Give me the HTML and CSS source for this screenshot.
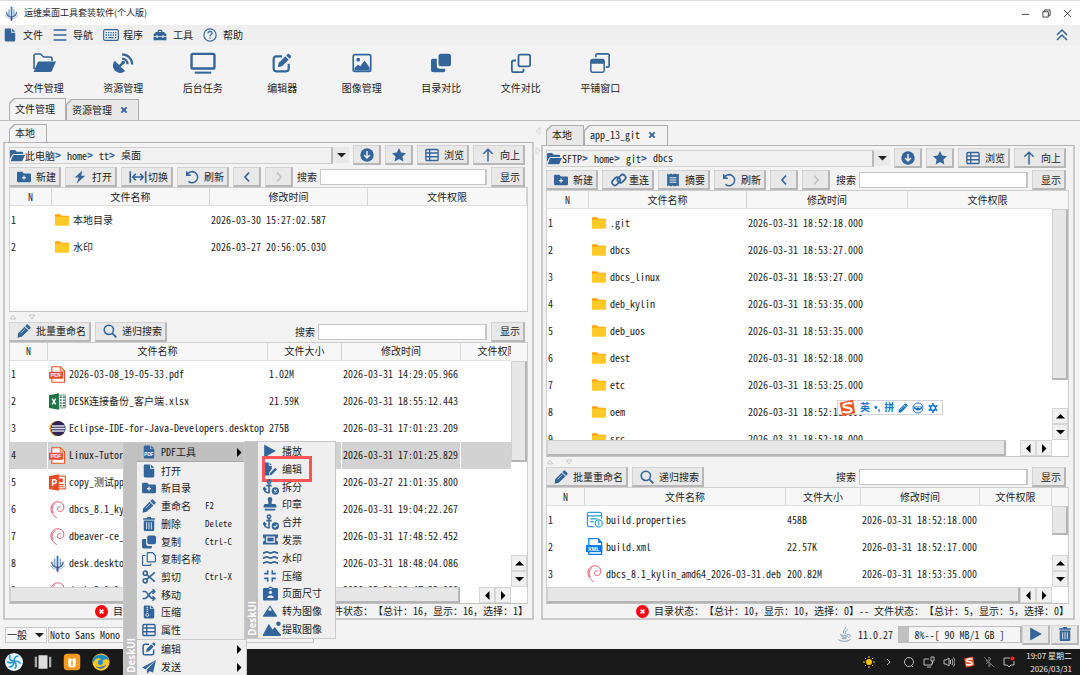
FILE: index.html
```html
<!DOCTYPE html>
<html lang="zh-CN">
<head>
<meta charset="utf-8">
<title>运维桌面工具套装软件(个人版)</title>
<link rel="stylesheet" href="styles.css">
</head>
<body>
<svg class="defs" aria-hidden="true">
  <symbol id="logo" viewBox="0 0 24 24"><g fill="none" stroke-linecap="round"><path d="M12 2v20" stroke="#3c78b8" stroke-width="2.6"/><path d="M8 6v9M16 6v9" stroke="#6f9fd0" stroke-width="2"/><path d="M4 10c0 5 3 7 8 8M20 10c0 5-3 7-8 8" stroke="#4a6ba0" stroke-width="2"/><path d="M2 15c2 3 5 5 10 5s8-2 10-5" stroke="#8fb1d8" stroke-width="1.4"/><path d="M12 17v6" stroke="#4b4277" stroke-width="2"/></g></symbol>
  <symbol id="file" viewBox="0 0 24 24"><path fill="currentColor" d="M5 1h9v7h7v13a2 2 0 0 1-2 2H5a2 2 0 0 1-2-2V3a2 2 0 0 1 2-2zM15.500 1l5.500 5.500h-5.500z"/></symbol>
  <symbol id="bars" viewBox="0 0 24 24"><path stroke="currentColor" stroke-width="2.600" d="M1 3.500h22M1 12h22M1 20.500h22"/></symbol>
  <symbol id="keyboard" viewBox="0 0 24 24"><rect x="1" y="4" width="22" height="16" rx="2" fill="none" stroke="currentColor" stroke-width="1.800"/><path stroke="currentColor" stroke-width="2" stroke-dasharray="2 1.500" d="M4 8.500h16M4 12h16"/><path stroke="currentColor" stroke-width="2" d="M4 16h2M8 16h8M18 16h2"/></symbol>
  <symbol id="toolbox" viewBox="0 0 24 24"><path fill="currentColor" d="M8 7V4.500A1.500 1.500 0 0 1 9.500 3h5A1.500 1.500 0 0 1 16 4.500V7h3l4 4v3h-5v-2h-2v2H8v-2H6v2H1v-3l4-4zM10 5v2h4V5zM1 15.500h5V17h2v-1.500h8V17h2v-1.500h5V21H1z"/></symbol>
  <symbol id="help" viewBox="0 0 24 24"><circle cx="12" cy="12" r="10.500" fill="none" stroke="currentColor" stroke-width="2"/><path d="M8.500 9.200c0-4.500 7-4.300 7 0 0 2.500-3.500 2.500-3.500 5M12 16.300v2.200" fill="none" stroke="currentColor" stroke-width="2.200"/></symbol>
  <symbol id="folder-open" viewBox="0 0 24 24"><path fill="none" stroke="currentColor" stroke-width="1.600" d="M2 18V5a2 2 0 0 1 2-2h4.500l3 3H18a2 2 0 0 1 2 2v2"/><path fill="currentColor" d="M7.500 10.500H24l-4 9.300a2 2 0 0 1-2 1.200H1.500l4-9.300a2 2 0 0 1 2-1.200z"/></symbol>
  <symbol id="folder-solid" viewBox="0 0 24 20"><path fill="currentColor" d="M0 15V3a2 2 0 0 1 2-2h6l3 3h8a2 2 0 0 1 2 2v1.500H6A3 3 0 0 0 3.300 9zM6 9h18l-4 9a2 2 0 0 1-2 1H1l3.500-9A1.500 1.500 0 0 1 6 9z"/></symbol>
  <symbol id="dish" viewBox="0 0 24 24"><path fill="currentColor" d="M3 9.500l4.700 4.700 2.500-2.500a2 2 0 1 1 1.800 1.800l-2.500 2.500 4.800 4.800a8 8 0 0 1-11.300-11.300z"/><path fill="none" stroke="currentColor" stroke-width="2.400" d="M11 7.300a6 6 0 0 1 6 6M11 2.500a11 11 0 0 1 11 11"/></symbol>
  <symbol id="monitor" viewBox="0 0 28 24"><rect x="1.500" y="2" width="25" height="16" rx="1.500" fill="none" stroke="currentColor" stroke-width="2.600"/><path d="M5 22.500h18" stroke="currentColor" stroke-width="2.200"/></symbol>
  <symbol id="edit" viewBox="0 0 24 24"><path fill="none" stroke="currentColor" stroke-width="2.600" d="M12 4H5a3 3 0 0 0-3 3v12a3 3 0 0 0 3 3h12a3 3 0 0 0 3-3v-6"/><path fill="currentColor" d="M8 12l8-8 4 4-8 8-5 1zM17 3l1.300-1.300a2 2 0 0 1 2.800 0l1.200 1.200a2 2 0 0 1 0 2.800L21 7z"/></symbol>
  <symbol id="image" viewBox="0 0 24 24"><rect x="1.500" y="2" width="21" height="20" rx="2" fill="none" stroke="currentColor" stroke-width="2"/><circle cx="7.500" cy="8" r="2.200" fill="currentColor"/><path fill="currentColor" d="M3 18l4-4 3 2 5-7 6 8v4H3z"/></symbol>
  <symbol id="copy" viewBox="0 0 24 24"><rect x="9" y="1" width="15" height="15" rx="3" fill="currentColor"/><path fill="currentColor" d="M7 7v8a4 4 0 0 0 4 4h6v2a2 2 0 0 1-2 2H3a3 3 0 0 1-3-3V9a2 2 0 0 1 2-2z"/></symbol>
  <symbol id="copy-line" viewBox="0 0 24 24"><g fill="none" stroke="currentColor" stroke-width="2.200"><rect x="9" y="2" width="14" height="14" rx="2"/><path d="M6 9H3a2 2 0 0 0-2 2v10a2 2 0 0 0 2 2h10a2 2 0 0 0 2-2v-2"/></g></symbol>
  <symbol id="copy-file" viewBox="0 0 24 24"><g fill="none" stroke="currentColor" stroke-width="2"><path d="M10 1h8l5 5v10a1 1 0 0 1-1 1H10a1 1 0 0 1-1-1V2a1 1 0 0 1 1-1zM6 6H2a1 1 0 0 0-1 1v15a1 1 0 0 0 1 1h12a1 1 0 0 0 1-1v-2"/></g></symbol>
  <symbol id="windows" viewBox="0 0 24 24"><path fill="none" stroke="currentColor" stroke-width="2" d="M7 5V3a2 2 0 0 1 2-2h12a2 2 0 0 1 2 2v12a2 2 0 0 1-2 2h-2"/><rect x="1" y="8" width="16" height="15" rx="2" fill="none" stroke="currentColor" stroke-width="1.800"/><path fill="currentColor" d="M1 13V9a2 2 0 0 1 2-2h12a2 2 0 0 1 2 2v4z"/></symbol>
  <symbol id="folder-plus" viewBox="0 0 24 20"><path fill="currentColor" fill-rule="evenodd" d="M0 3a2 2 0 0 1 2-2h7l3 3h10a2 2 0 0 1 2 2v11a2 2 0 0 1-2 2H2a2 2 0 0 1-2-2zM11 7.500V10H8.500v2H11v2.500h2V12h2.500v-2H13V7.500z"/></symbol>
  <symbol id="bolt" viewBox="0 0 24 24"><path fill="currentColor" d="M16 1L3 13h7L6 23l15-13h-7z"/></symbol>
  <symbol id="swap" viewBox="0 0 28 24"><path fill="none" stroke="currentColor" stroke-width="2.600" d="M2 3v18M26 3v18M6 12h16M10.500 7L6 12l4.500 5M17.500 7l4.500 5-4.500 5"/></symbol>
  <symbol id="undo" viewBox="0 0 24 24"><path fill="none" stroke="currentColor" stroke-width="2.600" d="M3 2v7h7M3.500 8.500A9.500 9.500 0 1 1 6 19.500"/></symbol>
  <symbol id="left" viewBox="0 0 24 24"><path fill="none" stroke="currentColor" stroke-width="3.400" d="M16 3l-8 9 8 9"/></symbol>
  <symbol id="right" viewBox="0 0 24 24"><path fill="none" stroke="currentColor" stroke-width="3.400" d="M8 3l8 9-8 9"/></symbol>
  <symbol id="down-circle" viewBox="0 0 24 24"><circle cx="12" cy="12" r="11.500" fill="currentColor"/><path fill="none" stroke="#eee" stroke-width="2.600" d="M12 5v12M7 12l5 5 5-5"/></symbol>
  <symbol id="star" viewBox="0 0 24 24"><path fill="currentColor" d="M12 0l3.600 7.700 8.400 1.100-6.200 5.800 1.600 8.400-7.400-4.100L4.600 23l1.600-8.400L0 8.800l8.400-1.100z"/></symbol>
  <symbol id="list" viewBox="0 0 24 24"><path fill="none" stroke="currentColor" stroke-width="2.300" d="M3.500 2.500h17a2 2 0 0 1 2 2v15a2 2 0 0 1-2 2h-17a2 2 0 0 1-2-2v-15a2 2 0 0 1 2-2zM2 8.500h20M2 15h20M8 3v18"/></symbol>
  <symbol id="up" viewBox="0 0 24 24"><path fill="none" stroke="currentColor" stroke-width="2.500" d="M12 23V2M4 10l8-8 8 8"/></symbol>
  <symbol id="link" viewBox="0 0 28 24"><g fill="none" stroke="currentColor" stroke-width="2.600"><rect x="-7" y="-4.500" width="14" height="9" rx="4.500" transform="translate(9.500 14) rotate(-45)"/><rect x="-7" y="-4.500" width="14" height="9" rx="4.500" transform="translate(18 10) rotate(-45)"/></g></symbol>
  <symbol id="receipt" viewBox="0 0 24 24"><path fill="currentColor" d="M2 1l3 1.500L8.500 1 12 2.500 15.500 1 19 2.500 22 1v22l-3-1.500-3.500 1.500-3.500-1.500L8.500 23 5 21.500 2 23z"/><path stroke="#eee" stroke-width="1.800" d="M6 8h12M6 12h12M6 16h12"/></symbol>
  <symbol id="pencil" viewBox="0 0 24 24"><path fill="currentColor" d="M16 1.500a2.500 2.500 0 0 1 3.500 0l3 3a2.500 2.500 0 0 1 0 3.500L20.500 10 14 3.500zM13 4.500l6.500 6.500L8 22l-7 1.500L2 16z"/><path stroke="#eee" stroke-width="1.200" d="M14 8l-8 8"/></symbol>
  <symbol id="search" viewBox="0 0 24 24"><circle cx="10" cy="10" r="8" fill="none" stroke="currentColor" stroke-width="2.600"/><path stroke="currentColor" stroke-width="3" d="M16 16l7 7"/></symbol>
  <symbol id="folder" viewBox="0 0 24 20"><path fill="#ffa000" d="M0 1.500A1.500 1.500 0 0 1 1.500 0h7L11 2.500h11.500A1.500 1.500 0 0 1 24 4v5H0z"/><rect y="4" width="24" height="16" rx="1.300" fill="#ffca28"/></symbol>
  <symbol id="pdf" viewBox="0 0 24 24"><path fill="#fff" stroke="#e94c22" stroke-width="1.500" d="M4 1h12l6 6v16H4z"/><path fill="none" stroke="#e94c22" stroke-width="1.300" d="M16 1v6h6"/><rect y="8" width="20" height="10" rx="1" fill="#e94c22"/><text x="10" y="16" class="badge-text">PDF</text></symbol>
  <symbol id="xlsx" viewBox="0 0 24 24"><rect x="11" y="3" width="12.500" height="18" rx="1" fill="#fff" stroke="#207245"/><path stroke="#207245" stroke-width="2" d="M15 6h3M19.500 6h3M15 10h3M19.500 10h3M15 14h3M19.500 14h3M15 18h3M19.500 18h3"/><path fill="#207245" d="M0 3l14-2.500v23L0 21z"/><path stroke="#fff" stroke-width="2" d="M4.500 8l5 8M9.500 8l-5 8"/></symbol>
  <symbol id="eclipse" viewBox="0 0 24 24"><circle cx="11" cy="12" r="10.500" fill="#f39b2d"/><circle cx="13" cy="12" r="10.500" fill="#302653"/><path stroke="#dfe0ef" stroke-width="2" d="M4 8.500h18M3 12h20M4 15.500h18"/></symbol>
  <symbol id="ppt" viewBox="0 0 24 24"><rect x="10" y="3" width="13" height="18" fill="#fff" stroke="#e94c22" stroke-width="1.500"/><circle cx="17" cy="9" r="3" fill="#e94c22"/><path stroke="#e94c22" stroke-width="1.500" d="M14 15h7M14 18h7"/><path fill="#e94c22" d="M0 3l14-2.500v23L0 21z"/><path fill="none" stroke="#fff" stroke-width="2" d="M5 17V8h2.500a2.700 2.700 0 0 1 0 5.400H5"/></symbol>
  <symbol id="debian" viewBox="0 0 24 24"><path fill="none" stroke="#e2566f" stroke-width="1.400" d="M11 23.500C5 20 2 15 3 9 4 3 10 0 15 1.500c5 1.500 7 6 5.500 10-1.500 4-7.500 4.500-8.500 1-.8-3 2-5.500 4.500-4M6 17C3.500 13 4 7 9 3"/></symbol>
  <symbol id="props" viewBox="0 0 24 24"><g fill="none" stroke="#249fdb" stroke-width="1.700"><path d="M11 22H4a2 2 0 0 1-2-2V4a2 2 0 0 1 2-2h16a2 2 0 0 1 2 2v7M2 7h20M6 11h10M6 15h5"/><circle cx="18" cy="17.500" r="5"/><path d="M18 16v4M18 13.800v1.200"/></g></symbol>
  <symbol id="xml" viewBox="0 0 24 24"><path fill="#fff" stroke="#0a7ce0" stroke-width="1.800" d="M4 1h13l5 5v17H4z"/><path fill="#0a7ce0" d="M17 1v6h6z"/><rect y="10" width="23" height="10" fill="#0a7ce0"/><text x="11" y="18" class="badge-text">XML</text></symbol>
  <symbol id="file-pdf" viewBox="0 0 24 24"><path fill="currentColor" d="M5 1h9v6h7v14a2 2 0 0 1-2 2H5a2 2 0 0 1-2-2V3a2 2 0 0 1 2-2zM15.500 1L21 6h-5.500z"/><text x="12" y="18" class="badge-text">PDF</text></symbol>
  <symbol id="trash" viewBox="0 0 24 24"><path fill="currentColor" d="M2 2h6l1-2h6l1 2h6v2.500H2zM3 6h18v16a2 2 0 0 1-2 2H5a2 2 0 0 1-2-2z"/><path stroke="#e8e8e8" stroke-width="1.600" d="M8 9v12M12 9v12M16 9v12"/></symbol>
  <symbol id="scissors" viewBox="0 0 24 24"><g fill="none" stroke="currentColor" stroke-width="2.800"><circle cx="5.500" cy="5.500" r="3.500"/><circle cx="5.500" cy="18.500" r="3.500"/><path d="M8 8l14 12M8 16L22 4"/></g></symbol>
  <symbol id="shuffle" viewBox="0 0 24 24"><path fill="none" stroke="currentColor" stroke-width="2.600" d="M1 6h4c5 0 8 12 13 12h4M1 18h4c5 0 8-12 13-12h4M18 2l4 4-4 4M18 14l4 4-4 4"/></symbol>
  <symbol id="zip" viewBox="0 0 24 24"><path fill="currentColor" d="M5 1h9v6h7v14a2 2 0 0 1-2 2H5a2 2 0 0 1-2-2V3a2 2 0 0 1 2-2zM15.500 1L21 6h-5.500z"/><path fill="none" stroke="#eee" stroke-width="2" stroke-dasharray="2 1.500" d="M9 3v10"/><circle cx="9" cy="17" r="2.500" fill="none" stroke="#eee" stroke-width="1.500"/></symbol>
  <symbol id="send" viewBox="0 0 24 24"><path fill="currentColor" d="M24 0L0 13l6 3zM24 0L8 17l1 7 4-5 6 3z"/></symbol>
  <symbol id="play" viewBox="0 0 24 24"><path fill="currentColor" d="M2 1l20 11L2 23z"/></symbol>
  <symbol id="file-pen" viewBox="0 0 24 24"><path fill="currentColor" d="M1 3a2 2 0 0 1 2-2h7v6h5v5l-4 5-1 6H3a2 2 0 0 1-2-2zM11.500 1L15 5.500h-3.500zM21 10l3 3-9 9-4 1 1-4z"/></symbol>
  <symbol id="anchor-x" viewBox="0 0 24 24"><g fill="none" stroke="currentColor" stroke-width="2.400"><circle cx="9" cy="4" r="2.500"/><path d="M9 7v14M5 10h8M2 14c0 4 3 7 8 7M0 16l2-3 3 3"/></g><circle cx="18.500" cy="18" r="5.500" fill="currentColor"/><path stroke="#eee" stroke-width="1.600" d="M16.500 16l4 4M20.500 16l-4 4"/></symbol>
  <symbol id="anchor-ok" viewBox="0 0 24 24"><g fill="none" stroke="currentColor" stroke-width="2.400"><circle cx="9" cy="4" r="2.500"/><path d="M9 7v14M5 10h8M2 14c0 4 3 7 8 7M0 16l2-3 3 3"/></g><circle cx="18.500" cy="18" r="5.500" fill="currentColor"/><path fill="none" stroke="#eee" stroke-width="1.600" d="M16 18l2 2 3.500-4"/></symbol>
  <symbol id="stamp" viewBox="0 0 24 24"><path fill="currentColor" d="M8 4a4 4 0 0 1 8 0c0 3-2 4-1 8h5a3 3 0 0 1 3 3v3H1v-3a3 3 0 0 1 3-3h5c1-4-1-5-1-8zM3 20h18v3H3z"/></symbol>
  <symbol id="ticket" viewBox="0 0 24 24"><path fill="currentColor" fill-rule="evenodd" d="M0 4h24v5a3 3 0 0 0 0 6v5H0v-5a3 3 0 0 0 0-6zM5 7v10h14V7z"/><path fill="currentColor" d="M7 9h10v6H7z"/></symbol>
  <symbol id="waves" viewBox="0 0 24 24"><path fill="none" stroke="currentColor" stroke-width="2.500" d="M0 5c3 0 3-2 6-2s3 2 6 2 3-2 6-2 3 2 6 2M0 13c3 0 3-2 6-2s3 2 6 2 3-2 6-2 3 2 6 2M0 21c3 0 3-2 6-2s3 2 6 2 3-2 6-2 3 2 6 2"/></symbol>
  <symbol id="compress" viewBox="0 0 24 24"><path fill="none" stroke="currentColor" stroke-width="2.800" d="M8 2v6H2M16 2v6h6M8 22v-6H2M16 22v-6h6"/></symbol>
  <symbol id="idcard" viewBox="0 0 24 24"><path fill="currentColor" d="M2 3h7V1h6v2h7a2 2 0 0 1 2 2v16a2 2 0 0 1-2 2H2a2 2 0 0 1-2-2V5a2 2 0 0 1 2-2z"/><circle cx="12" cy="10" r="2.600" fill="#eee"/><path fill="#eee" d="M7 19v-2l3-2h4l3 2v2zM10 3h4v2h-4z"/></symbol>
  <symbol id="peak" viewBox="0 0 24 24"><path fill="currentColor" d="M12 2l12 18a2 2 0 0 1-2 2H2a2 2 0 0 1-2-2z"/><path fill="#eee" d="M12 5l3.500 6-2-.5-1.500 2-1.500-2-2 .5z"/></symbol>
  <symbol id="peaks" viewBox="0 0 28 24"><path fill="currentColor" d="M0 21L9 4l6 9 3-4 10 12v2H0z"/><circle cx="24" cy="4" r="3.500" fill="currentColor"/></symbol>
  <symbol id="tri-down" viewBox="0 0 12 12"><path fill="currentColor" d="M2 4h9L6.500 8.500z"/></symbol>
  <symbol id="tri-up" viewBox="0 0 12 12"><path fill="currentColor" d="M2 8.500h9L6.500 4z"/></symbol>
  <symbol id="tri-left" viewBox="0 0 12 12"><path fill="currentColor" d="M8.500 2v9L4 6.500z"/></symbol>
  <symbol id="tri-right" viewBox="0 0 12 12"><path fill="currentColor" d="M4 2v9l4.500-4.500z"/></symbol>
  <symbol id="out-up" viewBox="0 0 12 12"><path fill="none" stroke="#b5b5b5" d="M2 9h8L6 3z"/></symbol>
  <symbol id="out-down" viewBox="0 0 12 12"><path fill="none" stroke="#b5b5b5" d="M2 3h8L6 9z"/></symbol>
  <symbol id="out-left" viewBox="0 0 12 12"><path fill="none" stroke="#c5c5c5" d="M9 1v10L3 6z"/></symbol>
  <symbol id="out-right" viewBox="0 0 12 12"><path fill="none" stroke="#c5c5c5" d="M3 1v10l6-5z"/></symbol>
  <symbol id="cross" viewBox="0 0 12 12"><path stroke="currentColor" stroke-width="2.800" d="M2 2l8 8M10 2l-8 8"/></symbol>
  <symbol id="error" viewBox="0 0 24 24"><circle cx="12" cy="12" r="12" fill="#f80510"/><path stroke="#fff" stroke-width="3" d="M8.500 8.500l7 7M15.500 8.500l-7 7"/></symbol>
  <symbol id="java" viewBox="0 0 24 24"><path fill="none" stroke="#7d9bb8" stroke-width="1.600" d="M13 0c2 4-5 5-2 10M17 4c-5 3-3 4-3 7M5 12c4 2 10 2 13 0M7 15c3 2 7 2 10 0M8 18c2 1 5 1 7 0M2 20c4 4 17 4 20-1M18 12c5 0 3 4 0 5"/></symbol>
  <symbol id="sogou" viewBox="0 0 24 24"><path fill="#f4511e" d="M2 5l18-4 3 18-17 4z"/><path fill="none" stroke="#fff" stroke-width="3" d="M19 6c-5-1-12 0-12 3 0 4 11 1 11 6 0 4-8 3-12 2"/></symbol>
</svg>

<div class="backdrop-edge"></div>
<header class="titlebar">
  <svg class="i15"><use href="#logo"/></svg>
  <h1>运维桌面工具套装软件(个人版)</h1>
  <div class="win-controls">
    <button aria-label="最小化"><svg viewBox="0 0 10 10"><path d="M1 6h8"/></svg></button>
    <button aria-label="还原"><svg viewBox="0 0 10 10"><path d="M1 3h6v6H1zM3 3V1h6v6H7"/></svg></button>
    <button aria-label="关闭"><svg viewBox="0 0 10 10"><path d="M1 1l8 8M9 1L1 9"/></svg></button>
  </div>
</header>
<nav class="menubar">
  <button><svg class="i14"><use href="#file"/></svg>文件</button>
  <button><svg class="i14"><use href="#bars"/></svg>导航</button>
  <button class="wide-icon"><svg class="i16"><use href="#keyboard"/></svg>程序</button>
  <button><svg class="i14"><use href="#toolbox"/></svg>工具</button>
  <button><svg class="i14"><use href="#help"/></svg>帮助</button>
  <button class="collapse" aria-label="收起"><svg class="i12" viewBox="0 0 12 12"><path fill="none" stroke="currentColor" stroke-width="1.500" d="M1 6l5-5 5 5M1 11l5-5 5 5"/></svg></button>
</nav>
<div class="toolbar">
  <button><svg class="i24"><use href="#folder-open"/></svg>文件管理</button>
  <button><svg class="i22"><use href="#dish"/></svg>资源管理</button>
  <button><svg class="i26"><use href="#monitor"/></svg>后台任务</button>
  <button><svg class="i20"><use href="#edit"/></svg>编辑器</button>
  <button><svg class="i20"><use href="#image"/></svg>图像管理</button>
  <button><svg class="i20"><use href="#copy"/></svg>目录对比</button>
  <button><svg class="i20"><use href="#copy-line"/></svg>文件对比</button>
  <button><svg class="i20"><use href="#windows"/></svg>平铺窗口</button>
</div>
<div class="tabs main-tabs">
  <button class="tab active">文件管理</button>
  <button class="tab">资源管理<svg class="i8"><use href="#cross"/></svg></button>
</div>

<main class="workspace">
  <section class="pane">
    <div class="tabs pane-tabs"><button class="tab active">本地</button></div>
    <div class="pane-body">
      <div class="bar">
        <div class="path"><svg class="i15"><use href="#folder-solid"/></svg><a href="#">此电脑<b>&gt;</b></a><a href="#">home<b>&gt;</b></a><a href="#">tt<b>&gt;</b></a><a href="#">桌面</a></div>
        <button class="drop" aria-label="历史路径"><svg class="i12"><use href="#tri-down"/></svg></button>
        <button class="btn small" aria-label="下载"><svg class="i14"><use href="#down-circle"/></svg></button>
        <button class="btn small" aria-label="收藏"><svg class="i14"><use href="#star"/></svg></button>
        <button class="btn"><svg class="i14"><use href="#list"/></svg>浏览</button>
        <button class="btn"><svg class="i14"><use href="#up"/></svg>向上</button>
      </div>
      <div class="bar">
        <button class="btn"><svg class="i14"><use href="#folder-plus"/></svg>新建</button>
        <button class="btn"><svg class="i14"><use href="#bolt"/></svg>打开</button>
        <button class="btn"><svg class="i18"><use href="#swap"/></svg>切换</button>
        <button class="btn"><svg class="i14"><use href="#undo"/></svg>刷新</button>
        <button class="btn small" aria-label="后退"><svg class="i12"><use href="#left"/></svg></button>
        <button class="btn small" aria-label="前进" disabled><svg class="i12"><use href="#right"/></svg></button>
        <label class="search">搜索<input type="text"></label>
        <button class="btn show">显示</button>
      </div>
      <div class="sheet left-dirs">
        <div class="clip"><table>
          <colgroup><col class="w42"><col class="w158"><col class="w158"><col></colgroup>
          <thead><tr><th>N</th><th>文件名称</th><th>修改时间</th><th>文件权限</th></tr></thead>
          <tbody>
            <tr><td>1</td><td><span class="name"><svg class="i14"><use href="#folder"/></svg>本地目录</span></td><td>2026-03-30 15:27:02.587</td><td></td></tr>
            <tr><td>2</td><td><span class="name"><svg class="i14"><use href="#folder"/></svg>水印</span></td><td>2026-03-27 20:56:05.030</td><td></td></tr>
          </tbody></table></div>
      </div>
      <div class="splitter"><svg class="i8"><use href="#out-up"/></svg><svg class="i8"><use href="#out-down"/></svg></div>
      <div class="bar">
        <button class="btn"><svg class="i14"><use href="#pencil"/></svg>批量重命名</button>
        <button class="btn"><svg class="i14"><use href="#search"/></svg>递归搜索</button>
        <label class="search">搜索<input type="text"></label>
        <button class="btn show">显示</button>
      </div>
      <div class="sheet scroll left-files">
        <div class="clip"><table class="wide">
          <colgroup><col class="w38"><col class="w220"><col class="w74"><col class="w119"><col></colgroup>
          <thead><tr><th>N</th><th>文件名称</th><th>文件大小</th><th>修改时间</th><th>文件权限</th></tr></thead>
          <tbody>
            <tr><td>1</td><td><span class="name"><svg class="i17"><use href="#pdf"/></svg>2026-03-08_19-05-33.pdf</span></td><td>1.02M</td><td>2026-03-31 14:29:05.966</td><td></td></tr>
            <tr><td>2</td><td><span class="name"><svg class="i17"><use href="#xlsx"/></svg>DESK连接备份_客户端.xlsx</span></td><td>21.59K</td><td>2026-03-31 18:55:12.443</td><td></td></tr>
            <tr><td>3</td><td><span class="name"><svg class="i17"><use href="#eclipse"/></svg>Eclipse-IDE-for-Java-Developers.desktop</span></td><td>275B</td><td>2026-03-31 17:01:23.209</td><td></td></tr>
            <tr class="selected"><td>4</td><td><span class="name"><svg class="i17"><use href="#pdf"/></svg>Linux-Tutorial.pdf</span></td><td></td><td>2026-03-31 17:01:25.829</td><td></td></tr>
            <tr><td>5</td><td><span class="name"><svg class="i17"><use href="#ppt"/></svg>copy_测试ppt.pptx</span></td><td></td><td>2026-03-27 21:01:35.800</td><td></td></tr>
            <tr><td>6</td><td><span class="name"><svg class="i17"><use href="#debian"/></svg>dbcs_8.1_kylin.deb</span></td><td></td><td>2026-03-31 19:04:22.267</td><td></td></tr>
            <tr><td>7</td><td><span class="name"><svg class="i17"><use href="#debian"/></svg>dbeaver-ce_amd64.deb</span></td><td></td><td>2026-03-31 17:48:52.452</td><td></td></tr>
            <tr><td>8</td><td><span class="name"><svg class="i17"><use href="#logo"/></svg>desk.desktop</span></td><td></td><td>2026-03-31 18:48:04.086</td><td></td></tr>
            <tr><td>9</td><td><span class="name"><svg class="i17"><use href="#debian"/></svg>desk_2.1.1_amd64.deb</span></td><td></td><td>2026-03-31 18:47:22.888</td><td></td></tr>
          </tbody></table></div>
        <div class="vbar"><div class="track"><div class="thumb"></div></div><button aria-label="向上滚动"><svg class="i12"><use href="#tri-up"/></svg></button><button aria-label="向下滚动"><svg class="i12"><use href="#tri-down"/></svg></button></div>
        <div class="hbar"><div class="track"><div class="thumb"></div></div><button aria-label="向左滚动"><svg class="i12"><use href="#tri-left"/></svg></button><button aria-label="向右滚动"><svg class="i12"><use href="#tri-right"/></svg></button></div>
      </div>
      <div class="status"><svg class="i13"><use href="#error"/></svg>目录状态：【总计：2，显示：2，选择：0】-- 文件状态：【总计：16，显示：16，选择：1】</div>
    </div>
  </section>

  <div class="divider"><svg class="i8"><use href="#out-left"/></svg><svg class="i8"><use href="#out-right"/></svg></div>

  <section class="pane remote">
    <div class="tabs pane-tabs"><button class="tab">本地</button><button class="tab active">app_13_git<svg class="i8"><use href="#cross"/></svg></button></div>
    <div class="pane-body">
      <div class="bar">
        <div class="path"><svg class="i15"><use href="#folder-solid"/></svg><a href="#">SFTP<b>&gt;</b></a><a href="#">home<b>&gt;</b></a><a href="#">git<b>&gt;</b></a><a href="#">dbcs</a></div>
        <button class="drop" aria-label="历史路径"><svg class="i12"><use href="#tri-down"/></svg></button>
        <button class="btn small" aria-label="下载"><svg class="i14"><use href="#down-circle"/></svg></button>
        <button class="btn small" aria-label="收藏"><svg class="i14"><use href="#star"/></svg></button>
        <button class="btn"><svg class="i14"><use href="#list"/></svg>浏览</button>
        <button class="btn"><svg class="i14"><use href="#up"/></svg>向上</button>
      </div>
      <div class="bar">
        <button class="btn"><svg class="i14"><use href="#folder-plus"/></svg>新建</button>
        <button class="btn"><svg class="i18"><use href="#link"/></svg>重连</button>
        <button class="btn"><svg class="i14"><use href="#receipt"/></svg>摘要</button>
        <button class="btn"><svg class="i14"><use href="#undo"/></svg>刷新</button>
        <button class="btn small" aria-label="后退"><svg class="i12"><use href="#left"/></svg></button>
        <button class="btn small" aria-label="前进" disabled><svg class="i12"><use href="#right"/></svg></button>
        <label class="search">搜索<input type="text"></label>
        <button class="btn show">显示</button>
      </div>
      <div class="sheet scroll right-dirs">
        <div class="clip"><table class="under">
          <colgroup><col class="w42"><col class="w158"><col class="w161"><col></colgroup>
          <thead><tr><th>N</th><th>文件名称</th><th>修改时间</th><th>文件权限</th></tr></thead>
          <tbody>
            <tr><td>1</td><td><span class="name"><svg class="i14"><use href="#folder"/></svg>.git</span></td><td>2026-03-31 18:52:18.000</td><td></td></tr>
            <tr><td>2</td><td><span class="name"><svg class="i14"><use href="#folder"/></svg>dbcs</span></td><td>2026-03-31 18:53:27.000</td><td></td></tr>
            <tr><td>3</td><td><span class="name"><svg class="i14"><use href="#folder"/></svg>dbcs_linux</span></td><td>2026-03-31 18:53:27.000</td><td></td></tr>
            <tr><td>4</td><td><span class="name"><svg class="i14"><use href="#folder"/></svg>deb_kylin</span></td><td>2026-03-31 18:53:35.000</td><td></td></tr>
            <tr><td>5</td><td><span class="name"><svg class="i14"><use href="#folder"/></svg>deb_uos</span></td><td>2026-03-31 18:53:35.000</td><td></td></tr>
            <tr><td>6</td><td><span class="name"><svg class="i14"><use href="#folder"/></svg>dest</span></td><td>2026-03-31 18:52:18.000</td><td></td></tr>
            <tr><td>7</td><td><span class="name"><svg class="i14"><use href="#folder"/></svg>etc</span></td><td>2026-03-31 18:53:25.000</td><td></td></tr>
            <tr><td>8</td><td><span class="name"><svg class="i14"><use href="#folder"/></svg>oem</span></td><td>2026-03-31 18:52:18.000</td><td></td></tr>
            <tr><td>9</td><td><span class="name"><svg class="i14"><use href="#folder"/></svg>src</span></td><td>2026-03-31 18:52:18.000</td><td></td></tr>
          </tbody></table></div>
        <div class="vbar"><div class="track"><div class="thumb"></div></div><button aria-label="向上滚动"><svg class="i12"><use href="#tri-up"/></svg></button><button aria-label="向下滚动"><svg class="i12"><use href="#tri-down"/></svg></button></div>
        <div class="hbar"><div class="track"><div class="thumb"></div></div><button aria-label="向左滚动"><svg class="i12"><use href="#tri-left"/></svg></button><button aria-label="向右滚动"><svg class="i12"><use href="#tri-right"/></svg></button></div>
      </div>
      <div class="splitter"><svg class="i8"><use href="#out-up"/></svg><svg class="i8"><use href="#out-down"/></svg></div>
      <div class="bar">
        <button class="btn"><svg class="i14"><use href="#pencil"/></svg>批量重命名</button>
        <button class="btn"><svg class="i14"><use href="#search"/></svg>递归搜索</button>
        <label class="search">搜索<input type="text"></label>
        <button class="btn show">显示</button>
      </div>
      <div class="sheet scroll right-files">
        <div class="clip"><table>
          <colgroup><col class="w38"><col class="w201"><col class="w75"><col class="w119"><col></colgroup>
          <thead><tr><th>N</th><th>文件名称</th><th>文件大小</th><th>修改时间</th><th>文件权限</th></tr></thead>
          <tbody>
            <tr><td>1</td><td><span class="name"><svg class="i17"><use href="#props"/></svg>build.properties</span></td><td>458B</td><td>2026-03-31 18:52:18.000</td><td></td></tr>
            <tr><td>2</td><td><span class="name"><svg class="i17"><use href="#xml"/></svg>build.xml</span></td><td>22.57K</td><td>2026-03-31 18:52:17.000</td><td></td></tr>
            <tr><td>3</td><td><span class="name"><svg class="i17"><use href="#debian"/></svg>dbcs_8.1_kylin_amd64_2026-03-31.deb</span></td><td>200.82M</td><td>2026-03-31 18:53:35.000</td><td></td></tr>
          </tbody></table></div>
        <div class="vbar"><div class="track"><div class="thumb"></div></div><button aria-label="向上滚动"><svg class="i12"><use href="#tri-up"/></svg></button><button aria-label="向下滚动"><svg class="i12"><use href="#tri-down"/></svg></button></div>
        <div class="hbar"><div class="track"><div class="thumb"></div></div><button aria-label="向左滚动"><svg class="i12"><use href="#tri-left"/></svg></button><button aria-label="向右滚动"><svg class="i12"><use href="#tri-right"/></svg></button></div>
      </div>
      <div class="status"><svg class="i13"><use href="#error"/></svg>目录状态：【总计：10，显示：10，选择：0】-- 文件状态：【总计：5，显示：5，选择：0】</div>
    </div>
  </section>
</main>

<footer class="footer">
  <span class="combo"><select aria-label="字号"><option>一般</option></select><svg class="i12"><use href="#tri-down"/></svg></span>
  <span class="combo font"><select aria-label="字体"><option>Noto Sans Mono CJK SC</option></select><svg class="i12"><use href="#tri-down"/></svg></span>
  <span class="spacer"></span>
  <svg class="i15"><use href="#java"/></svg>
  <span class="version">11.0.27</span>
  <div class="memory"><div class="memory-used"></div><span>8%--[ 90 MB/1 GB ]</span></div>
  <button class="btn small" aria-label="运行"><svg class="i14"><use href="#play"/></svg></button>
  <button class="btn small" aria-label="清理内存"><svg class="i14"><use href="#trash"/></svg></button>
</footer>

<div class="taskbar">
  <button aria-label="开始"><svg class="i18" viewBox="0 0 24 24"><circle cx="12" cy="12" r="12" fill="#e9f6ff"/><path fill="none" stroke="#2393d8" stroke-width="2" d="M7 3c-3 5 1 7 5 8M3 11c3 4 7 2 9 0M5 18c5 2 7-3 7-7M13 21c4-4 1-8-1-10M18 4c-5 0-6 4-6 7M21 14c-3-3-6-4-9-3"/></svg></button>
  <button aria-label="任务视图"><svg class="i18" viewBox="0 0 24 24"><path fill="#aaa" d="M1 5h3v14H1zM20 5h3v14h-3z"/><path fill="#ddd" d="M6 3h12v18H6z"/></svg></button>
  <button aria-label="应用"><svg class="i18" viewBox="0 0 24 24"><rect x="1" y="1" width="22" height="22" rx="5" fill="#f59a1f"/><path fill="#fff" d="M7 8l3-2v2h4V6l3 2v8a3 3 0 0 1-3 3h-4a3 3 0 0 1-3-3z"/><path stroke="#f59a1f" stroke-width="2" d="M12 10v7"/></svg></button>
  <button aria-label="浏览器"><svg class="i18" viewBox="0 0 24 24"><circle cx="12" cy="12" r="11.500" fill="#ffc71f"/><path fill="#178bd6" d="M1 9a12 12 0 0 1 22 1c-4-3-8-2-9 1 2 5-4 7-6 3-1-4 3-6 6-5C9 5 4 7 1 14z"/><path fill="#2a72be" d="M5 18c5 5 12 3 14-3-4 4-10 4-14 3z"/></svg></button>
  <div class="tray">
    <svg class="i12" viewBox="0 0 12 12"><circle cx="6" cy="6" r="3" fill="#ffc107" stroke="none"/><path stroke="#ffc107" d="M6 0v2M6 10v2M0 6h2M10 6h2M2 2l1 1M9 9l1 1M10 2L9 3M2 10l1-1"/></svg>
    <svg class="i12" viewBox="0 0 12 12"><path d="M4 3l3 3-3 3"/></svg>
    <svg class="i12" viewBox="0 0 12 12"><circle cx="6" cy="6" r="4.500"/><path d="M8 9l2 2"/></svg>
    <svg class="i12" viewBox="0 0 12 12"><path d="M6 3H1v6h8V7M4 11h4M8 1h3v4H8zM9.500 5v3"/></svg>
    <svg class="i12" viewBox="0 0 12 12"><path d="M1 4h2l3-2v8L3 8H1zM7.500 4v4M9 3c1 2 1 4 0 6M10.500 1.500c2 3 2 6 0 9"/></svg>
    <svg class="i12 plain"><use href="#sogou"/></svg>
    <svg class="i12 dim" viewBox="0 0 12 12"><path d="M3 4l5 4-2 3V1l2 2-5 5M1 1l10 10"/></svg>
    <svg class="i12" viewBox="0 0 12 12"><path d="M7 2H1v7h3l2 2 2-2h3V5"/><circle cx="9.500" cy="2.500" r="2" fill="#f22" stroke="none"/></svg>
  </div>
  <div class="clock"><span>19:07 星期二</span><span>2026/03/31</span></div>
</div>

<div class="ime">
  <svg class="i18"><use href="#sogou"/></svg><span>英</span><span>•,</span><span>拼</span>
  <svg class="i10"><use href="#pencil"/></svg>
  <svg class="i12" viewBox="0 0 12 12"><circle cx="6" cy="6" r="5" fill="none" stroke="currentColor"/><path fill="currentColor" d="M2 4.500h8v2L7 8.500H5l-3-2z"/><path stroke="#fff" d="M3.500 5.500h2M6.500 5.500h2"/></svg>
  <svg class="i10" viewBox="0 0 12 12"><circle cx="6" cy="6" r="3" fill="none" stroke="currentColor" stroke-width="2"/><path stroke="currentColor" stroke-width="2" d="M6 0v2.500M6 9.500V12M.8 3L3 4.300M9 7.700L11.200 9M.8 9L3 7.700M9 4.300L11.200 3"/></svg>
</div>

<div class="popup context">
  <div class="brand"><span>DeskUI</span></div>
  <div class="items">
    <div class="group">
      <button class="current"><svg class="i14"><use href="#file-pdf"/></svg>PDF工具<svg class="more"><use href="#tri-right"/></svg></button>
      <button><svg class="i14"><use href="#file"/></svg>打开</button>
      <button><svg class="i14"><use href="#folder-plus"/></svg>新目录</button>
      <button><svg class="i14"><use href="#pencil"/></svg>重命名<kbd>F2</kbd></button>
      <button><svg class="i14"><use href="#trash"/></svg>删除<kbd>Delete</kbd></button>
      <button><svg class="i14"><use href="#copy"/></svg>复制<kbd>Ctrl-C</kbd></button>
      <button><svg class="i14"><use href="#copy-file"/></svg>复制名称</button>
      <button><svg class="i14"><use href="#scissors"/></svg>剪切<kbd>Ctrl-X</kbd></button>
      <button><svg class="i14"><use href="#shuffle"/></svg>移动</button>
      <button><svg class="i14"><use href="#zip"/></svg>压缩</button>
      <button><svg class="i14"><use href="#list"/></svg>属性</button>
    </div>
    <div class="group tail">
      <button><svg class="i14"><use href="#edit"/></svg>编辑<svg class="more"><use href="#tri-right"/></svg></button>
      <button><svg class="i14"><use href="#send"/></svg>发送<svg class="more"><use href="#tri-right"/></svg></button>
    </div>
  </div>
</div>
<div class="popup submenu">
  <div class="brand"><span>DeskUI</span></div>
  <div class="items"><div class="group">
    <button><svg class="i14"><use href="#play"/></svg>播放</button>
    <button class="marked"><svg class="i14"><use href="#file-pen"/></svg>编辑</button>
    <button><svg class="i16"><use href="#anchor-x"/></svg>拆分</button>
    <button><svg class="i14"><use href="#stamp"/></svg>印章</button>
    <button><svg class="i16"><use href="#anchor-ok"/></svg>合并</button>
    <button><svg class="i15"><use href="#ticket"/></svg>发票</button>
    <button><svg class="i15"><use href="#waves"/></svg>水印</button>
    <button><svg class="i14"><use href="#compress"/></svg>压缩</button>
    <button><svg class="i15"><use href="#idcard"/></svg>页面尺寸</button>
    <button><svg class="i14"><use href="#peak"/></svg>转为图像</button>
    <button><svg class="i18"><use href="#peaks"/></svg>提取图像</button>
  </div></div>
</div>
</body>
</html>
```
FILE: styles.css
```css
* { box-sizing: border-box; }
body {
  margin: 0; height: 100vh; display: flex; flex-direction: column; overflow: hidden; position: relative;
  background: #f3f3f3; color: #1c1c1c;
  font: 10px/14px "Noto Sans Mono CJK SC", "Noto Sans CJK SC", sans-serif;
  text-spacing-trim: space-all;
}
.defs { position: absolute; width: 0; height: 0; }
.badge-text { fill: #fff; font: bold 8px "Liberation Sans", sans-serif; text-anchor: middle; }
button, input, select, kbd { font: inherit; color: inherit; margin: 0; }
button { border: 0; padding: 0; background: none; white-space: nowrap; }
svg { color: #33659a; flex: none; display: block; }
.i8 { width: 8px; height: 8px; }
.i10 { width: 10px; height: 10px; }
.i12 { width: 12px; height: 12px; }
.i13 { width: 13px; height: 13px; }
.i14 { width: 14px; height: 14px; }
.i15 { width: 15px; height: 15px; }
.i16 { width: 16px; height: 16px; }
.i17 { width: 17px; height: 17px; }
.i18 { width: 18px; height: 18px; }
.i20 { width: 20px; height: 20px; }
.i22 { width: 22px; height: 22px; }
.i24 { width: 24px; height: 24px; }
.i26 { width: 26px; height: 22px; }

.backdrop-edge { height: 1px; flex: none; background: #dcdcdc; }
.titlebar { flex: none; height: 24px; display: flex; align-items: center; gap: 5px; padding: 0 8px 0 4px; background: #fff; }
.titlebar h1 { margin: 0; font: 9px/14px "Noto Sans CJK SC", sans-serif; }
.win-controls { margin-left: auto; display: flex; gap: 12px; }
.win-controls svg { width: 9px; height: 9px; fill: none; stroke: #333; }
.menubar { flex: none; height: 20px; display: flex; align-items: center; padding: 0 12px 0 3px; background: #efefef; }
.menubar button { display: flex; align-items: center; gap: 6px; width: 50px; }
.menubar .wide-icon { gap: 4px; }
.menubar .collapse { width: auto; margin-left: auto; }
.toolbar { flex: none; height: 52px; width: 640px; max-width: 100%; padding-left: 4px; display: grid; grid-template-columns: repeat(8, 1fr); }
.toolbar button { display: grid; grid-template-rows: 36px 14px; justify-items: center; align-items: center; }

.tabs { flex: none; display: flex; align-items: flex-end; }
.tab { position: relative; isolation: isolate; display: flex; align-items: center; gap: 8px; padding: 0 11px 0 6px; background: #adadad; clip-path: polygon(0 5px, 5px 0, 100% 0, 100% 100%, 0 100%); }
.tab::before { content: ""; position: absolute; z-index: -1; inset: 1px 1px 0; background: #e8e8e8; clip-path: polygon(0 5px, 5px 0, 100% 0, 100% 100%, 0 100%); }
.tab.active::before { background: #f3f3f3; }
.main-tabs { height: 23px; padding-left: 9px; }
.main-tabs .tab { height: 21px; }
.main-tabs .active { height: 22px; }
.pane-tabs { height: 21px; padding-left: 6px; }
.pane-tabs .tab { height: 18px; padding-right: 12px; }
.remote .pane-tabs { height: 24px; padding-left: 5px; }
.remote .pane-tabs .tab { height: 20px; }

.workspace { flex: 1; min-height: 0; display: grid; grid-template-columns: minmax(0, 531fr) 7px minmax(0, 534fr); padding: 0 5px 0 3px; border-top: 1px solid #bdbdbd; }
.pane { display: flex; flex-direction: column; min-width: 0; min-height: 0; }
.pane-body { flex: 1; min-height: 0; display: flex; flex-direction: column; border: 2px solid #c9c9c9; border-top: 1px solid #b3b3b3; padding: 1px 4px 0; }
.remote .pane-body { padding: 1px 4px 0 3px; }
.divider { padding-top: 6px; display: flex; flex-direction: column; align-items: center; gap: 12px; }
.bar { flex: none; height: 20px; display: flex; align-items: center; gap: 4px; padding-right: 3px; margin-top: 1px; }
.bar + .bar { margin-top: 2px; }
.splitter + .bar { margin-top: 0; }
.path { flex: 1; height: 17px; display: flex; align-items: center; border: 1px solid #d0d0d0; border-right: 2px solid #b9b9b9; background: #f1f1f1; }
.path a { color: inherit; text-decoration: none; margin-right: 5px; white-space: nowrap; }
.path b { display: inline-block; width: 7px; color: #33659a; font: bold 12px/14px "Noto Sans Mono CJK SC", "Noto Sans CJK SC", sans-serif; }
.drop { width: 16px; height: 16px; display: grid; place-items: center; background: #e9e9e9; margin-left: -4px; }
.drop svg { color: #222; }
.btn { flex: none; height: 20px; min-width: 52px; display: flex; align-items: center; justify-content: flex-end; gap: 5px; padding: 0 3px 0 7px; background: #e8e8e8; border: 1px solid #d3d3d3; border-right: 2px solid #b7b7b7; border-bottom: 2px solid #b7b7b7; }
.btn .i18 { margin-right: -4px; }
.btn.small { min-width: 28px; padding: 0; justify-content: center; }
.btn.show { min-width: 34px; padding: 0 3px; }
.btn:disabled svg { color: #c3c3c3; }
.search { margin-left: auto; display: flex; align-items: center; gap: 3px; min-width: 0; white-space: nowrap; }
.search input { flex: 0 1 169px; width: 169px; min-width: 0; height: 16px; padding: 0 3px; border: 1px solid #c6c6c6; border-right-width: 2px; background: #fff; }

.sheet { position: relative; min-height: 0; display: grid; grid-template: minmax(0, 1fr) / minmax(0, 1fr); background: #fff; border: 1px solid #cfcfcf; border-bottom: 1px solid #c2c2c2; overflow: hidden; }
.scroll { grid-template: minmax(0, 1fr) 16px / minmax(0, 1fr) 16px; }
.left-dirs { flex: 124 1 0; }
.left-files { flex: 263 1 0; }
.right-dirs { flex: 268 1 0; }
.right-files { flex: 116 1 0; }
.clip { overflow: hidden; }
table { width: 100%; table-layout: fixed; border-collapse: separate; border-spacing: 0; }
table.under { width: calc(100% + 16px); }
table.wide { width: calc(100% + 24px); }
.w38 { width: 38px; } .w42 { width: 42px; } .w74 { width: 74px; } .w75 { width: 75px; }
.w119 { width: 119px; } .w158 { width: 158px; } .w161 { width: 161px; } .w201 { width: 201px; } .w220 { width: 220px; }
th { height: 18px; padding: 0; font-weight: normal; background: #f7f7f7; border-right: 1px solid #d6d6d6; border-bottom: 1px solid #e0e0e0; }
td { height: 27px; padding: 0 0 0 1px; white-space: nowrap; overflow: hidden; }
.name { display: flex; align-items: center; gap: 3px; }
.name .i14 { margin: 0 1px 0 2px; }
.selected td { background: #d2d2d2; border-right: 1px solid #fff; }
.vbar { display: flex; flex-direction: column; border-top: 18px solid #f7f7f7; }
.hbar { display: flex; }
.track { flex: 1; background: #fff; }
.thumb { background: #e7e7e7; border: 1px solid #cfcfcf; border-right: 2px solid #b5b5b5; border-bottom: 2px solid #b5b5b5; }
.hbar .thumb { height: 16px; }
.left-files .vbar .thumb { height: 52%; } .left-files .hbar .thumb { width: 96%; }
.right-dirs .vbar .thumb { height: 86%; } .right-dirs .hbar .thumb { width: 97%; }
.right-files .vbar .thumb { height: 60%; } .right-files .hbar .thumb { width: 100%; }
.vbar button, .hbar button { flex: none; width: 16px; height: 16px; display: grid; place-items: center; background: #f0f0f0; border: 1px solid #d5d5d5; }
.vbar svg, .hbar svg, .more { color: #000; }
.splitter { flex: none; height: 10px; display: flex; gap: 11px; align-items: center; }
.status { flex: none; height: 14px; display: flex; align-items: center; justify-content: flex-end; gap: 5px; white-space: nowrap; }

.footer { flex: none; height: 29px; display: flex; align-items: center; padding-left: 5px; }
.combo { display: flex; align-items: center; width: 42px; height: 16px; border: 1px solid #c8c8c8; margin-right: 1px; padding-right: 1px; background: #f7f7f7; }
.combo.font { width: 266px; }
.combo select { appearance: none; border: 0; background: none; flex: 1; min-width: 0; padding: 0 0 0 1px; }
.combo svg { color: #222; }
.spacer { flex: 1; }
.version { margin: 0 5px 0 6px; }
.memory { position: relative; width: 124px; height: 17px; display: grid; place-items: center; background: #f5f5f5; border: 1px solid #bdbdbd; border-right: 2px solid #b5b5b5; }
.memory-used { position: absolute; left: 0; top: 0; bottom: 0; width: 8%; background: #c0c0c0; }
.memory span { position: relative; }
.footer .btn { margin-right: 1px; }

.taskbar { flex: none; height: 26px; display: flex; align-items: center; gap: 11px; padding: 0 8px 0 5px; background: #191919; color: #e8e8e8; }
.taskbar button { display: grid; place-items: center; }
.tray { margin-left: auto; display: flex; gap: 8px; }
.tray svg { fill: none; stroke: #bbb; stroke-width: 1; }
.tray .plain { stroke: none; }
.tray .dim { stroke: #777; }
.clock { display: flex; flex-direction: column; align-items: flex-end; font: 8px/13px "Noto Sans CJK SC", sans-serif; }

.ime { position: absolute; left: 837px; top: 400px; height: 15px; display: flex; align-items: center; gap: 4px; padding-right: 4px; background: #fff; border: 1px solid #d2d2d8; color: #1677c8; font: bold 10px/13px "Liberation Sans", "Noto Sans CJK SC", sans-serif; }
.ime svg { color: #1677c8; }

.popup { position: absolute; display: flex; background: #efefef; border: 1px solid #c9c9c9; }
.context { left: 123px; top: 442px; width: 124px; height: 233px; border-bottom: 0; }
.submenu { left: 244px; top: 441px; width: 92px; }
.brand { flex: none; width: 13px; background: #c1c1c1; display: flex; align-items: flex-end; justify-content: center; color: #fff; padding-bottom: 2px; }
.brand span { writing-mode: vertical-rl; transform: rotate(180deg); font: bold 10px/12px "Noto Sans CJK SC", sans-serif; }
.items { flex: 1; min-width: 0; }
.group { height: 196px; display: flex; flex-direction: column; }
.group.tail { height: 37px; border-top: 1px solid #c9c9c9; }
.popup button { flex: 1; min-height: 0; display: grid; grid-template-columns: 19px 44px 1fr; align-items: center; justify-items: start; padding-left: 5px; text-align: left; position: relative; }
.popup .current { background: #c0c0c0; border-bottom: 1px solid #a8a8a8; }
.popup kbd { font-size: 9px; }
.more { width: 12px; height: 12px; justify-self: end; margin-right: 1px; }
.marked::after { content: ""; position: absolute; left: 4px; right: 23px; top: -4px; bottom: -4px; border: 3px solid #ff5357; }
```
